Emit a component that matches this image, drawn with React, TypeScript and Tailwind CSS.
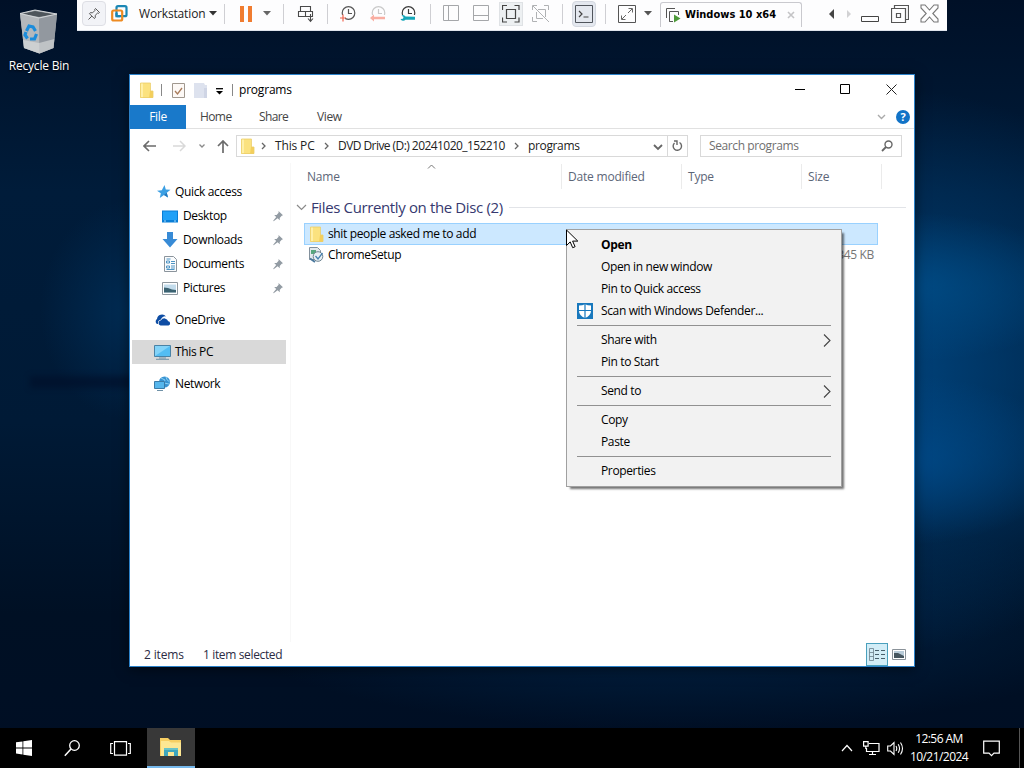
import type { ReactNode } from "react";

type IconProps = { className?: string };

const Svg = ({ w, h, children, className = "" }: { w: number; h: number; children: ReactNode; className?: string }) => (
    <svg width={w} height={h} viewBox={`0 0 ${w} ${h}`} fill="none" className={`shrink-0 ${className}`}>
        {children}
    </svg>
);

const Caret = ({ className = "" }: IconProps) => (
    <Svg w={8} h={5} className={className}><path d="M0 0h8L4 4.6z" fill="currentColor" /></Svg>
);

const Separator = ({ className = "" }: IconProps) => <div className={`w-px h-5 bg-[#cfcfd3] shrink-0 ${className}`} />;

const Folder = ({ className = "" }: IconProps) => (
    <Svg w={15} h={17} className={className}>
        <path d="M1 1h10l.5 8H14v7H1z" fill="#fbe27f" />
        <path d="M1 1h3v15H1z" fill="#fff0a8" />
        <path d="M11 9h3v7h-4z" fill="#f4cf5c" />
        <path d="M1.500 1h10v8H14v6.500H1.500z" stroke="#ecce68" strokeWidth=".8" />
    </Svg>
);

const Clock = ({ color, children }: { color: string; children?: ReactNode }) => (
    <Svg w={18} h={18}>
        <circle cx="8.500" cy="8" r="6.300" stroke={color} strokeWidth="1.200" />
        <path d="M8.500 4v4.500H12" stroke={color} strokeWidth="1.200" />
        {children}
    </Svg>
);

const Pin = () => (
    <Svg w={12} h={12}>
        <path d="M6.500 1l4.500 4.200-1.300.6-2 2.200.1 2.200-2.200-2L2 11l-.8.2.2-.8 2.800-3.500-2-2 2.400.1 2-2.300z" fill="#929ba3" />
    </Svg>
);

function Toolbar() {
    return (
        <div className="absolute left-[77px] top-0 w-[870px] h-[31px] bg-[#fdfdfe] border-b border-[#dfe4ec] flex pl-[5px] text-[#333]">
            <div className="flex items-center h-[27px]">
                <div className="w-6 h-[25px] bg-[#f2f3f7] border border-[#dedfe5] rounded-sm flex items-center justify-center">
                    <Svg w={14} h={14}>
                        <path d="M8.500 1.500l4 4-1 .8-1-.2-2.300 2.300.1 2.300-1 .8-4.800-4.800.8-1 2.300.1L7.900 3.500l-.2-1zM4.900 9.100L1.500 12.500" stroke="#555" />
                    </Svg>
                </div>
                {/* overlapping squares logo */}
                <Svg w={17} h={17} className="ml-[5px]">
                    <rect x="5.500" y="1.200" width="10" height="10" rx="1.500" stroke="#1b87b5" strokeWidth="2.200" />
                    <rect x="1.200" y="5.500" width="10" height="10" rx="1.500" stroke="#ee8b22" strokeWidth="2.200" />
                    <path d="M5.500 8V11.200H9" stroke="#1b87b5" strokeWidth="2.200" />
                </Svg>
                <span className="ml-[11px] w-[66px] text-[12px] tracking-[-0.15px] text-[#222]">Workstation</span>
                <Caret className="ml-1" />
                <Separator className="ml-[7px]" />
                <div className="ml-[15px] flex gap-1">
                    <div className="w-1 h-4 bg-[#f07c30]" />
                    <div className="w-1 h-4 bg-[#f07c30]" />
                </div>
                <Caret className="ml-[11px] text-[#666]" />
                <Separator className="ml-3" />
                <Svg w={18} h={18} className="ml-[13px]">
                    <path d="M3.500 1.500h10v5h-10zM1.500 6.500h7v5h-7zM8.500 6.500h7v5h-7zM13.500 9v7M11 13.500l2.500 2.800 2.500-2.800" stroke="#4a4a4a" strokeWidth="1.100" />
                </Svg>
                <Separator className="ml-3" />
                <div className="ml-3 flex gap-3">
                    <Clock color="#555">
                        <path d="M1 10h4v7H1z" fill="#fdfdfe" />
                        <path d="M3 9.500v7M0 13h6" stroke="#f0654f" strokeWidth="1.200" />
                    </Clock>
                    <Clock color="#c9c9c9">
                        <path d="M0 10h17v6H0z" fill="#fdfdfe" />
                        <path d="M0 13L4 9.500v2.200h11v2.600H4v2.200z" fill="#f9aea2" />
                    </Clock>
                    <Clock color="#3a3a3a">
                        <path d="M0 10h17v7H0z" fill="#fdfdfe" />
                        <path d="M5.500 11.500a3 3 0 0 0-4-1l2 1.500-.5 1.800-2.500.2a3 3 0 0 0 5 .8H15v-3z" fill="#16a7b9" />
                    </Clock>
                </div>
                <Separator className="ml-3" />
                <Svg w={17} h={17} className="ml-3"><path d="M.5 .5h15v15H.5zM5.500 .5v15" stroke="#a5a7aa" /></Svg>
                <Svg w={17} h={17} className="ml-[13px]"><path d="M.5 .5h15v15H.5zM.5 10.500h15" stroke="#a5a7aa" /></Svg>
                <div className="ml-[9px] w-6 h-6 bg-[#edf0f2] border border-[#dfe2e5] flex items-center justify-center">
                    <Svg w={18} h={18}>
                        <path d="M.5 5V.5H5M12.500 .5H17V5M17 12.500V17h-4.500M5 17H.5v-4.500M4.500 4.500h9v9h-9z" stroke="#444" strokeWidth="1.200" />
                    </Svg>
                </div>
                <Svg w={18} h={18} className="ml-[9px]">
                    <path d="M1 1l16 16M.5 5V.5H5M6 4.500h7.500V12M4.500 7v6.500H11M16.500 5V.5H12M.5 12v4.500H5" stroke="#b0b2b4" />
                </Svg>
                <Separator className="ml-3" />
                <div className="ml-[9px] w-6 h-[26px] bg-[#e4e8ef] border border-[#d3d7df] rounded-sm flex items-center justify-center">
                    <Svg w={18} h={18}>
                        <path d="M.5 .5h17v17H.500z" stroke="#50555c" />
                        <path d="M4 6l3 3-3 3M8.500 12h5" stroke="#444" strokeWidth="1.200" />
                    </Svg>
                </div>
                <Separator className="ml-[9px]" />
                <Svg w={18} h={18} className="ml-3">
                    <path d="M.5 .5h17v17H.500z" stroke="#555" />
                    <path d="M10.500 3.500h4v4M14 4l-4 4M3.500 10.500v4h4M4 14l4-4" stroke="#666" />
                </Svg>
                <Caret className="ml-2 text-[#555]" />
            </div>
            <div className="ml-2 mt-[2px] h-[25px] w-[142px] border border-b-0 border-[#c9c9ce] rounded-t-[3px] flex items-center pl-[5px]">
                <Svg w={15} h={15}>
                    <path d="M9 .5H.5V10M3.500 13.500V3.500h9V7M3.500 11.500v2H7" stroke="#555" />
                    <path d="M8 6.500l6.500 4L8 14.500z" fill="#4e9a3a" />
                </Svg>
                <span className="ml-1 w-[92px] whitespace-nowrap font-['DejaVu_Sans_Condensed','DejaVu_Sans'] font-bold text-[11px] text-black">Windows 10 x64</span>
                <Svg w={8} h={8} className="ml-[10px]"><path d="M1 1l6 6M7 1L1 7" stroke="#c4c4c6" strokeWidth="1.600" /></Svg>
            </div>
            <div className="flex items-center h-[27px]">
                <Svg w={5} h={10} className="ml-[27px]"><path d="M5 0v10L0 5z" fill="#444" /></Svg>
                <Svg w={4} h={8} className="ml-[13px]"><path d="M0 0v8l4-4z" fill="#d2d2d4" /></Svg>
                <Svg w={18} h={6} className="ml-[10px] mt-[10px]"><path d="M.5 .5h17v5H.500z" stroke="#444" /></Svg>
                <Svg w={18} h={18} className="ml-3">
                    <path d="M.5 3.500h14v14H.5zM3.500 3V.500h14v14H15M5.500 8.500h4v4h-4z" stroke="#555" strokeWidth="1.200" />
                </Svg>
                <Svg w={19} h={19} className="ml-[11px]">
                    <path d="M1 1h4l4.500 5L14 1h4v3l-5.200 5.500L18 15v3h-4l-4.500-5L5 18H1v-3l5.200-5.500L1 4z" stroke="#777" strokeWidth="1.100" />
                </Svg>
            </div>
        </div>
    );
}

function RecycleBin() {
    return (
        <div className="absolute left-0 top-[9px] w-[78px] flex flex-col items-center">
            <Svg w={42} h={46}>
                <path d="M2 4.500L17 1l22 4-3.500 34-14 5.500L6 39z" fill="#9fa5ab" />
                <path d="M2 4.500L21 9l.5 35.500L6 39z" fill="#b4b8bc" />
                <path d="M21 9l18-4-3.500 34-14 5.500z" fill="#92989f" />
                <path d="M4 4.800L17 2l19.500 3.200L21 8z" fill="#4e555b" />
                <path d="M2 4.500L17 1l22 4-18 4z" stroke="#d3d6d8" />
                <path d="M5 31l16 3 15.300-4-.8 9-14 5.500L6 39z" fill="#dedfdf" opacity=".6" />
                <path d="M8.500 22l2.500-5 4 1 2.500 4M18.500 25l-2 5h-4.500M9.500 29.500l-2.500-3.500 1-3" stroke="#1b8cdb" strokeWidth="3.200" />
            </Svg>
            <span className="mt-[3px] text-[12px] leading-4 text-white tracking-[-0.2px] [text-shadow:0_1px_2px_black]">Recycle Bin</span>
        </div>
    );
}

const StarIcon = () => <Svg w={14} h={14}><path d="M7.500 0l1.300 4.500 4.700.2-3.700 3 1.200 4.800L7 10l-4.200 3 1-4.800L0 5.700l4.800-.4z" fill="#3b9fe3" /><path d="M7 10l4 2.500-1.200-4.800 3.700-3z" fill="#2478bd" /></Svg>;
const DesktopIcon = () => <Svg w={16} h={13}><path d="M0 .5h16v12H0z" fill="#0a7ed6" /><path d="M1 1.500h14v8.500H1z" fill="#21a1f7" /><path d="M2 11h2M12 11h2" stroke="#a5dcff" /></Svg>;
const DownloadIcon = () => <Svg w={16} h={16}><path d="M5 0h6v7h4.500L8 15.500.5 7H5z" fill="#388bd6" /></Svg>;
const DocumentIcon = () => (
    <Svg w={13} h={16}>
        <path d="M.5 .5h9l3 3v12H.5z" fill="#fbfcfd" stroke="#8b949c" />
        <path d="M2.500 5h3v2h-3zM2.500 10h3v2h-3zM7 5.500h4M7 7.500h4M2.500 3h4M7 10h4M7 12h4M2.500 13.500h8" stroke="#4e94c4" />
    </Svg>
);
const PicturesIcon = () => <Svg w={16} h={13}><path d="M.5 .5h15v12H.5z" fill="white" stroke="#8e979e" /><path d="M2 2.500h12v8H2z" fill="#c3dcec" /><path d="M2 5.500l4 .5 4 1.500 4 .5v2.500H2z" fill="#3b6271" /></Svg>;
const OneDriveIcon = () => <Svg w={17} h={12}><path d="M3 10a3 3 0 0 1 0-5A5 5 0 0 1 12 2.500 4 4 0 0 0 7 5.500 4 4 0 0 0 4 10z" fill="#0e4da4" /><path d="M6.500 11.500a2.700 2.700 0 0 1 .5-5.300 4 4 0 0 1 7.200 1 2.200 2.200 0 0 1 .3 4.300z" fill="#0e4da4" /></Svg>;
const PcIcon = () => <Svg w={17} h={15}><path d="M.5 .5h16v11H.5z" fill="#53bdf3" stroke="#4a82a5" /><path d="M1 11L16 1H1z" fill="#83d3f8" /><path d="M5 13h7M2 14.300h13" stroke="#6f91a7" /></Svg>;
const NetworkIcon = () => (
    <Svg w={17} h={16}>
        <circle cx="10.500" cy="6" r="5.500" fill="#3893d2" />
        <path d="M7 2l4 2-1 3 5 1M12 .8l1 3 2.500 2" stroke="#8bd0f4" />
        <path d="M.5 5.500h10v7H.500z" fill="#56b6ec" stroke="#3a7ba8" />
        <path d="M3 14.500h6" stroke="#6f91a7" />
    </Svg>
);

const quickLinks = [
    { label: "Desktop", icon: <DesktopIcon /> },
    { label: "Downloads", icon: <DownloadIcon /> },
    { label: "Documents", icon: <DocumentIcon /> },
    { label: "Pictures", icon: <PicturesIcon /> },
];

function NavPane() {
    return (
        <div className="w-[161px] shrink-0 pl-[2px] pt-[17px] text-black border-r border-[#f8f8f8]">
            <div className="h-6 flex items-center pl-[25px]">
                <StarIcon />
                <span className="ml-[4px]">Quick access</span>
            </div>
            {quickLinks.map((link) => (
                <div key={link.label} className="h-6 flex items-center pl-[30px] pr-[6px]">
                    <div className="w-4 flex justify-center">{link.icon}</div>
                    <span className="ml-[5px] flex-1">{link.label}</span>
                    <Pin />
                </div>
            ))}
            <div className="mt-2 h-6 flex items-center pl-[22px]">
                <OneDriveIcon />
                <span className="ml-1">OneDrive</span>
            </div>
            <div className="mt-2 h-6 w-[154px] flex items-center pl-[22px] bg-[#d9d9d9]">
                <PcIcon />
                <span className="ml-1">This PC</span>
            </div>
            <div className="mt-2 h-6 flex items-center pl-[22px]">
                <NetworkIcon />
                <span className="ml-1">Network</span>
            </div>
        </div>
    );
}

const Crumb = () => <Svg w={5} h={8}><path d="M1 1l3 3-3 3" stroke="#666" strokeWidth="1.300" /></Svg>;

function AddressRow() {
    return (
        <div className="h-[34px] flex items-center pl-[13px] text-[#222]">
            <Svg w={14} h={12}><path d="M6 1L1 6l5 5M1 6h12" stroke="#6b6b6b" strokeWidth="1.600" /></Svg>
            <Svg w={14} h={12} className="ml-[15px]"><path d="M8 1l5 5-5 5M13 6H1" stroke="#d9d9d9" strokeWidth="1.500" /></Svg>
            <Svg w={8} h={6} className="ml-[12px]"><path d="M1.500 1.500l2.500 2.500 2.500-2.500" stroke="#8a8a8a" strokeWidth="1.300" /></Svg>
            <Svg w={12} h={13} className="ml-[11px]"><path d="M1 6l5-5 5 5M6 1v12" stroke="#6b6b6b" strokeWidth="1.700" /></Svg>
            <div className="ml-[7px] w-[452px] h-[22px] border border-[#d9d9d9] flex items-center pl-[3px]">
                <Folder />
                <div className="ml-[6px]"><Crumb /></div>
                <span className="ml-[9px] w-[41px] whitespace-nowrap tracking-[-0.15px]">This PC</span>
                <div className="ml-[8px]"><Crumb /></div>
                <span className="ml-[9px] w-[168px] whitespace-nowrap tracking-[-0.56px]">DVD Drive (D:) 20241020_152210</span>
                <div className="ml-[8px]"><Crumb /></div>
                <span className="ml-[9px] flex-1">programs</span>
                <Svg w={10} h={7} className="mr-[4px] mt-[3px]"><path d="M1 1l4 4 4-4" stroke="#666" strokeWidth="1.800" /></Svg>
                <div className="w-5 h-full border-l border-[#d9d9d9] flex items-center justify-center">
                    <Svg w={11} h={12}><path d="M7.500 2.500A4.200 4.200 0 1 1 2.500 3M2 1h3v4" stroke="#666" strokeWidth="1.400" /></Svg>
                </div>
            </div>
            <div className="ml-[12px] w-[202px] h-[22px] border border-[#d9d9d9] flex items-center justify-between pl-[8px] pr-[8px] text-[#707070]">
                <span className="tracking-[-0.4px]">Search programs</span>
                <Svg w={12} h={12}><circle cx="7.500" cy="4.500" r="3.500" stroke="#666" strokeWidth="1.400" /><path d="M5 7L1 11" stroke="#666" strokeWidth="1.800" /></Svg>
            </div>
        </div>
    );
}

function FileList() {
    return (
        <div className="flex-1 flex flex-col min-w-0">
            <div className="relative h-[25px] mt-px flex text-[#5c6678] tracking-[-0.2px]">
                <div className="w-[271px] pl-[16px] border-r border-[#ebebeb] flex items-center">Name</div>
                <div className="w-[120px] pl-[6px] border-r border-[#ebebeb] flex items-center whitespace-nowrap">Date modified</div>
                <div className="w-[120px] pl-[6px] border-r border-[#ebebeb] flex items-center">Type</div>
                <div className="w-[80px] pl-[6px] border-r border-[#ebebeb] flex items-center">Size</div>
                <Svg w={9} h={5} className="absolute left-[136px] top-0"><path d="M1 4.500l3.500-3.500L8 4.500" stroke="#777" /></Svg>
            </div>
            <div className="mt-[6px] h-6 flex items-center pl-[5px] text-[#36396f]">
                <Svg w={11} h={7}><path d="M1 1l4.500 4.500L10 1" stroke="#8a8a8a" strokeWidth="1.200" /></Svg>
                <span className="ml-[4px] text-[15px] tracking-[-0.37px] whitespace-nowrap w-[193px]">Files Currently on the Disc (2)</span>
                <div className="ml-[5px] w-[397px] h-px bg-[#e2e4e8]" />
            </div>
            <div className="mt-1 ml-[13px] w-[574px] h-[22px] bg-[#cce8ff] border border-[#99d1ff] flex items-center pl-[4px] text-black">
                <Folder />
                <span className="ml-1">shit people asked me to add</span>
            </div>
            <div className="ml-[13px] w-[574px] h-5 flex items-center pl-[5px] pr-[4px] text-black">
                <Svg w={15} h={16}>
                    <path d="M.5 .5h8l3 3v9H.5z" fill="#e4eaee" stroke="#82909c" />
                    <path d="M2 3h5v4H2z" fill="#58a77e" />
                    <circle cx="9" cy="9.500" r="4.800" fill="#e8f0f4" stroke="#708592" />
                    <path d="M6.500 9l2.500 3 4.500-6" stroke="#4681b0" strokeWidth="1.300" />
                    <path d="M1 11.500l5 3.500" stroke="#49779c" strokeWidth="2" />
                </Svg>
                <span className="ml-1 flex-1">ChromeSetup</span>
                <span className="text-[#757575]">1,345 KB</span>
            </div>
        </div>
    );
}

function ExplorerWindow() {
    return (
        <div className="absolute left-[129px] top-[74px] w-[786px] h-[593px] bg-white border border-[#2c82c9] flex flex-col text-[12px] leading-4 tracking-[-0.36px] shadow-[0_2px_12px_rgba(0,0,0,0.5)]">
            <div className="h-[30px] flex items-center pl-[9px] text-black">
                <Folder />
                <div className="ml-[7px] w-px h-3 bg-[#888]" />
                <Svg w={13} h={15} className="ml-[10px]"><path d="M.5 .5h12v14H.5z" fill="#fdf9f6" stroke="#a0988f" /><path d="M3 8l2.500 3L10 5" stroke="#a87b5a" strokeWidth="1.300" /></Svg>
                <Svg w={13} h={15} className="ml-[9px]"><path d="M0 0h10l1 2h2v13H0z" fill="#dde2ee" /><path d="M10 5h3v10h-3z" fill="#cfd5e5" /></Svg>
                <Svg w={7} h={7} className="ml-[9px] mt-[3px]"><path d="M0 .7h7" stroke="black" strokeWidth="1.300" /><path d="M0 3h7L3.500 6.500z" fill="black" /></Svg>
                <div className="ml-[9px] w-px h-3 bg-[#888]" />
                <span className="ml-[6px] flex-1 tracking-[-0.2px]">programs</span>
                <Svg w={10} h={11} className="mb-px"><path d="M0 5.500h10" stroke="black" /></Svg>
                <Svg w={11} h={11} className="ml-[35px] mb-px"><path d="M.5 .5h9v9H.5z" stroke="black" /></Svg>
                <Svg w={11} h={11} className="ml-[35px] mr-[17px] mb-[2px]"><path d="M.5 .5l10 10M10.500 .5l-10 10" stroke="#222" /></Svg>
            </div>
            <div className="h-6 border-b border-[#e1e1e1] flex items-center text-[#444]">
                <div className="w-14 h-6 bg-[#1979ca] text-white flex items-center justify-center">File</div>
                <span className="ml-[14px] w-[31px] tracking-[-0.6px]">Home</span>
                <span className="ml-[28px] w-[30px] tracking-[-0.6px]">Share</span>
                <span className="ml-[28px] flex-1">View</span>
                <Svg w={9} h={6}><path d="M1 1l3.500 3.500L8 1" stroke="#aaa" strokeWidth="1.400" /></Svg>
                <div className="ml-[10px] mr-[4px] size-[14px] rounded-full bg-[#1173c7] text-white text-[11px] font-bold leading-[14px] text-center">?</div>
            </div>
            <AddressRow />
            <div className="flex-1 flex">
                <NavPane />
                <FileList />
            </div>
            <div className="h-6 flex items-center pl-[14px] pr-[8px] pt-px text-[#2b2b44] whitespace-nowrap">
                <span className="w-[39px] tracking-[-0.15px]">2 items</span>
                <span className="ml-[20px] flex-1">1 item selected</span>
                <div className="w-[22px] h-[23px] border border-[#4aa0bd] bg-[#d2edf7] flex items-center justify-center">
                    <Svg w={17} h={14}>
                        <path d="M.5 .5h4v12h-4zM.5 4.500h4M.5 8.500h4" stroke="#6b7f8a" strokeWidth=".8" />
                        <path d="M6 2.500h4M12 2.500h4M6 6.500h4M12 6.500h4M6 10.500h4M12 10.500h4" stroke="#48606c" />
                    </Svg>
                </div>
                <Svg w={14} h={11} className="ml-[4px]"><path d="M.5 .5h13v10H.5z" fill="white" stroke="#8a9299" /><path d="M2 2h10v7H2z" fill="#b8cbd8" /><path d="M2 4l4 0 6 3v2H2z" fill="#46565f" /></Svg>
            </div>
        </div>
    );
}

const DefenderIcon = () => (
    <Svg w={16} h={16}>
        <path d="M0 0h16v16H0z" fill="#1878bd" />
        <path d="M2 2.500q3.500 0 6-1.300 2.500 1.300 6 1.300V8q0 4.500-6 7-6-2.500-6-7z" fill="white" />
        <path d="M8 1v14M2 7.500h12" stroke="#1878bd" strokeWidth="1.200" />
    </Svg>
);

const menuGroups: { label: string; bold?: boolean; icon?: ReactNode; sub?: boolean }[][] = [
    [
        { label: "Open", bold: true },
        { label: "Open in new window" },
        { label: "Pin to Quick access" },
        { label: "Scan with Windows Defender...", icon: <DefenderIcon /> },
    ],
    [{ label: "Share with", sub: true }, { label: "Pin to Start" }],
    [{ label: "Send to", sub: true }],
    [{ label: "Copy" }, { label: "Paste" }],
    [{ label: "Properties" }],
];

function ContextMenu() {
    return (
        <div className="absolute left-[566px] top-[229px] w-[276px] h-[258px] bg-[#f2f2f2] border border-[#a0a0a0] pt-1 text-[12px] leading-4 tracking-[-0.36px] text-black shadow-[3px_3px_2px_-1px_rgba(0,0,0,0.55)]">
            {menuGroups.map((group, i) => (
                <div key={i}>
                    {i > 0 && <div className="h-[7px] pt-[3px] mx-[10px]"><div className="h-px bg-[#919191]" /></div>}
                    {group.map((item) => (
                        <div key={item.label} className="h-[22px] flex items-center pl-[10px] pr-[10px]">
                            <div className="w-6">{item.icon}</div>
                            <span className={item.bold ? "flex-1 font-bold" : "flex-1"}>{item.label}</span>
                            {item.sub && <Svg w={8} h={13}><path d="M1 .5l6 6-6 6" stroke="#444" strokeWidth="1.100" /></Svg>}
                        </div>
                    ))}
                </div>
            ))}
        </div>
    );
}

function Taskbar() {
    return (
        <div className="absolute inset-x-0 bottom-0 h-10 bg-black flex items-center text-white">
            <div className="w-12 flex justify-center">
                <Svg w={16} h={16}><path d="M0 2.300l6.500-.9v6.100H0zM7.300 1.300L16 0v7.500H7.300zM0 8.400h6.500v6.100L0 13.600zM7.300 8.400H16V16l-8.700-1.300z" fill="white" /></Svg>
            </div>
            <div className="w-12 flex justify-center">
                <Svg w={16} h={17}><circle cx="10.500" cy="5.500" r="4.800" stroke="white" strokeWidth="1.300" /><path d="M7 9L.8 15.800" stroke="white" strokeWidth="1.500" /></Svg>
            </div>
            <div className="w-12 flex justify-center">
                <Svg w={21} h={15}><path d="M4.500 .7h12v13.500h-12zM3 2.500H.700v10H3M18 2.500h2.300v10H18" stroke="white" strokeWidth="1.200" /></Svg>
            </div>
            <div className="ml-[3px] w-12 h-10 bg-[#383838] border-b-2 border-[#76b9ed] flex items-center justify-center">
                <Svg w={22} h={19}>
                    <path d="M0 0h8l2 2h11v16H0z" fill="#f7cf63" />
                    <path d="M1 3h8l2 1.500h10V18H1z" fill="#fde793" />
                    <path d="M4 10h14v8h-4v-4H8v4H4z" fill="#3ea6bd" />
                    <path d="M4 10h14v2H4z" fill="#6ac3c7" />
                </Svg>
            </div>
            <div className="flex-1" />
            <Svg w={12} h={8}><path d="M1 7l5-5.500L11 7" stroke="white" strokeWidth="1.200" /></Svg>
            <Svg w={17} h={14} className="ml-[10px]">
                <path d="M6 2.500h10v8H3.500V7M9.500 10.500v3M6 13.500h7" stroke="white" strokeWidth="1.200" />
                <path d="M.6 .6h4.500v4.500H.600zM2.800 5v3" stroke="white" strokeWidth="1.200" />
            </Svg>
            <Svg w={17} h={15} className="ml-[7px]">
                <path d="M.7 5h2.800L7 1.500v12L3.500 10H.7z" stroke="white" strokeWidth="1.100" />
                <path d="M9 5q1.500 2.500 0 5M11.200 3.300q2.700 4.200 0 8.400M13.500 1.500q4 6 0 12" stroke="white" strokeWidth="1.100" />
            </Svg>
            <div className="ml-[2px] w-[66px] text-center text-[12px] leading-[18px] tracking-[-0.55px] whitespace-nowrap">
                <div>12:56 AM</div>
                <div>10/21/2024</div>
            </div>
            <Svg w={17} h={17} className="ml-[11px]"><path d="M.7 1.200h15.600v12H11L8.500 15.700 6 13.200H.7z" stroke="white" strokeWidth="1.200" /></Svg>
            <div className="ml-[19px] mr-[4px] w-px h-10 bg-[#555]" />
        </div>
    );
}

const Cursor = () => (
    <Svg w={13} h={20} className="absolute left-[566px] top-[229px]">
        <path d="M.5 1v15.500l3.700-3.600 2.500 5.800 2.400-1-2.500-5.600h5.200z" fill="white" stroke="black" />
    </Svg>
);

function Wallpaper() {
    return (
        <div className="absolute inset-0 bg-[linear-gradient(to_bottom,#001027_0%,#001c3a_25%,#001a36_55%,#001024_80%,#000e24_100%)]">
            <div className="absolute inset-0 bg-[radial-gradient(ellipse_190px_75px_at_900px_287px,#00508ccc_0%,transparent_100%),radial-gradient(ellipse_170px_85px_at_900px_460px,#004e90cc_0%,transparent_100%),radial-gradient(ellipse_300px_280px_at_900px_370px,#00427a_0%,transparent_100%),radial-gradient(ellipse_90px_110px_at_130px_310px,#002c54_0%,transparent_100%),radial-gradient(ellipse_460px_110px_at_680px_620px,#002448_0%,transparent_100%)]" />
            <div className="absolute left-[30px] top-[376px] w-[110px] h-[12px] bg-[#000e28] opacity-60 blur-[3px]" />
        </div>
    );
}

export default function App() {
    return (
        <div className="relative w-[1024px] h-[768px] overflow-hidden font-['Open_Sans','Noto_Sans',sans-serif]">
            <Wallpaper />
            <RecycleBin />
            <Toolbar />
            <ExplorerWindow />
            <ContextMenu />
            <Cursor />
            <Taskbar />
        </div>
    );
}
